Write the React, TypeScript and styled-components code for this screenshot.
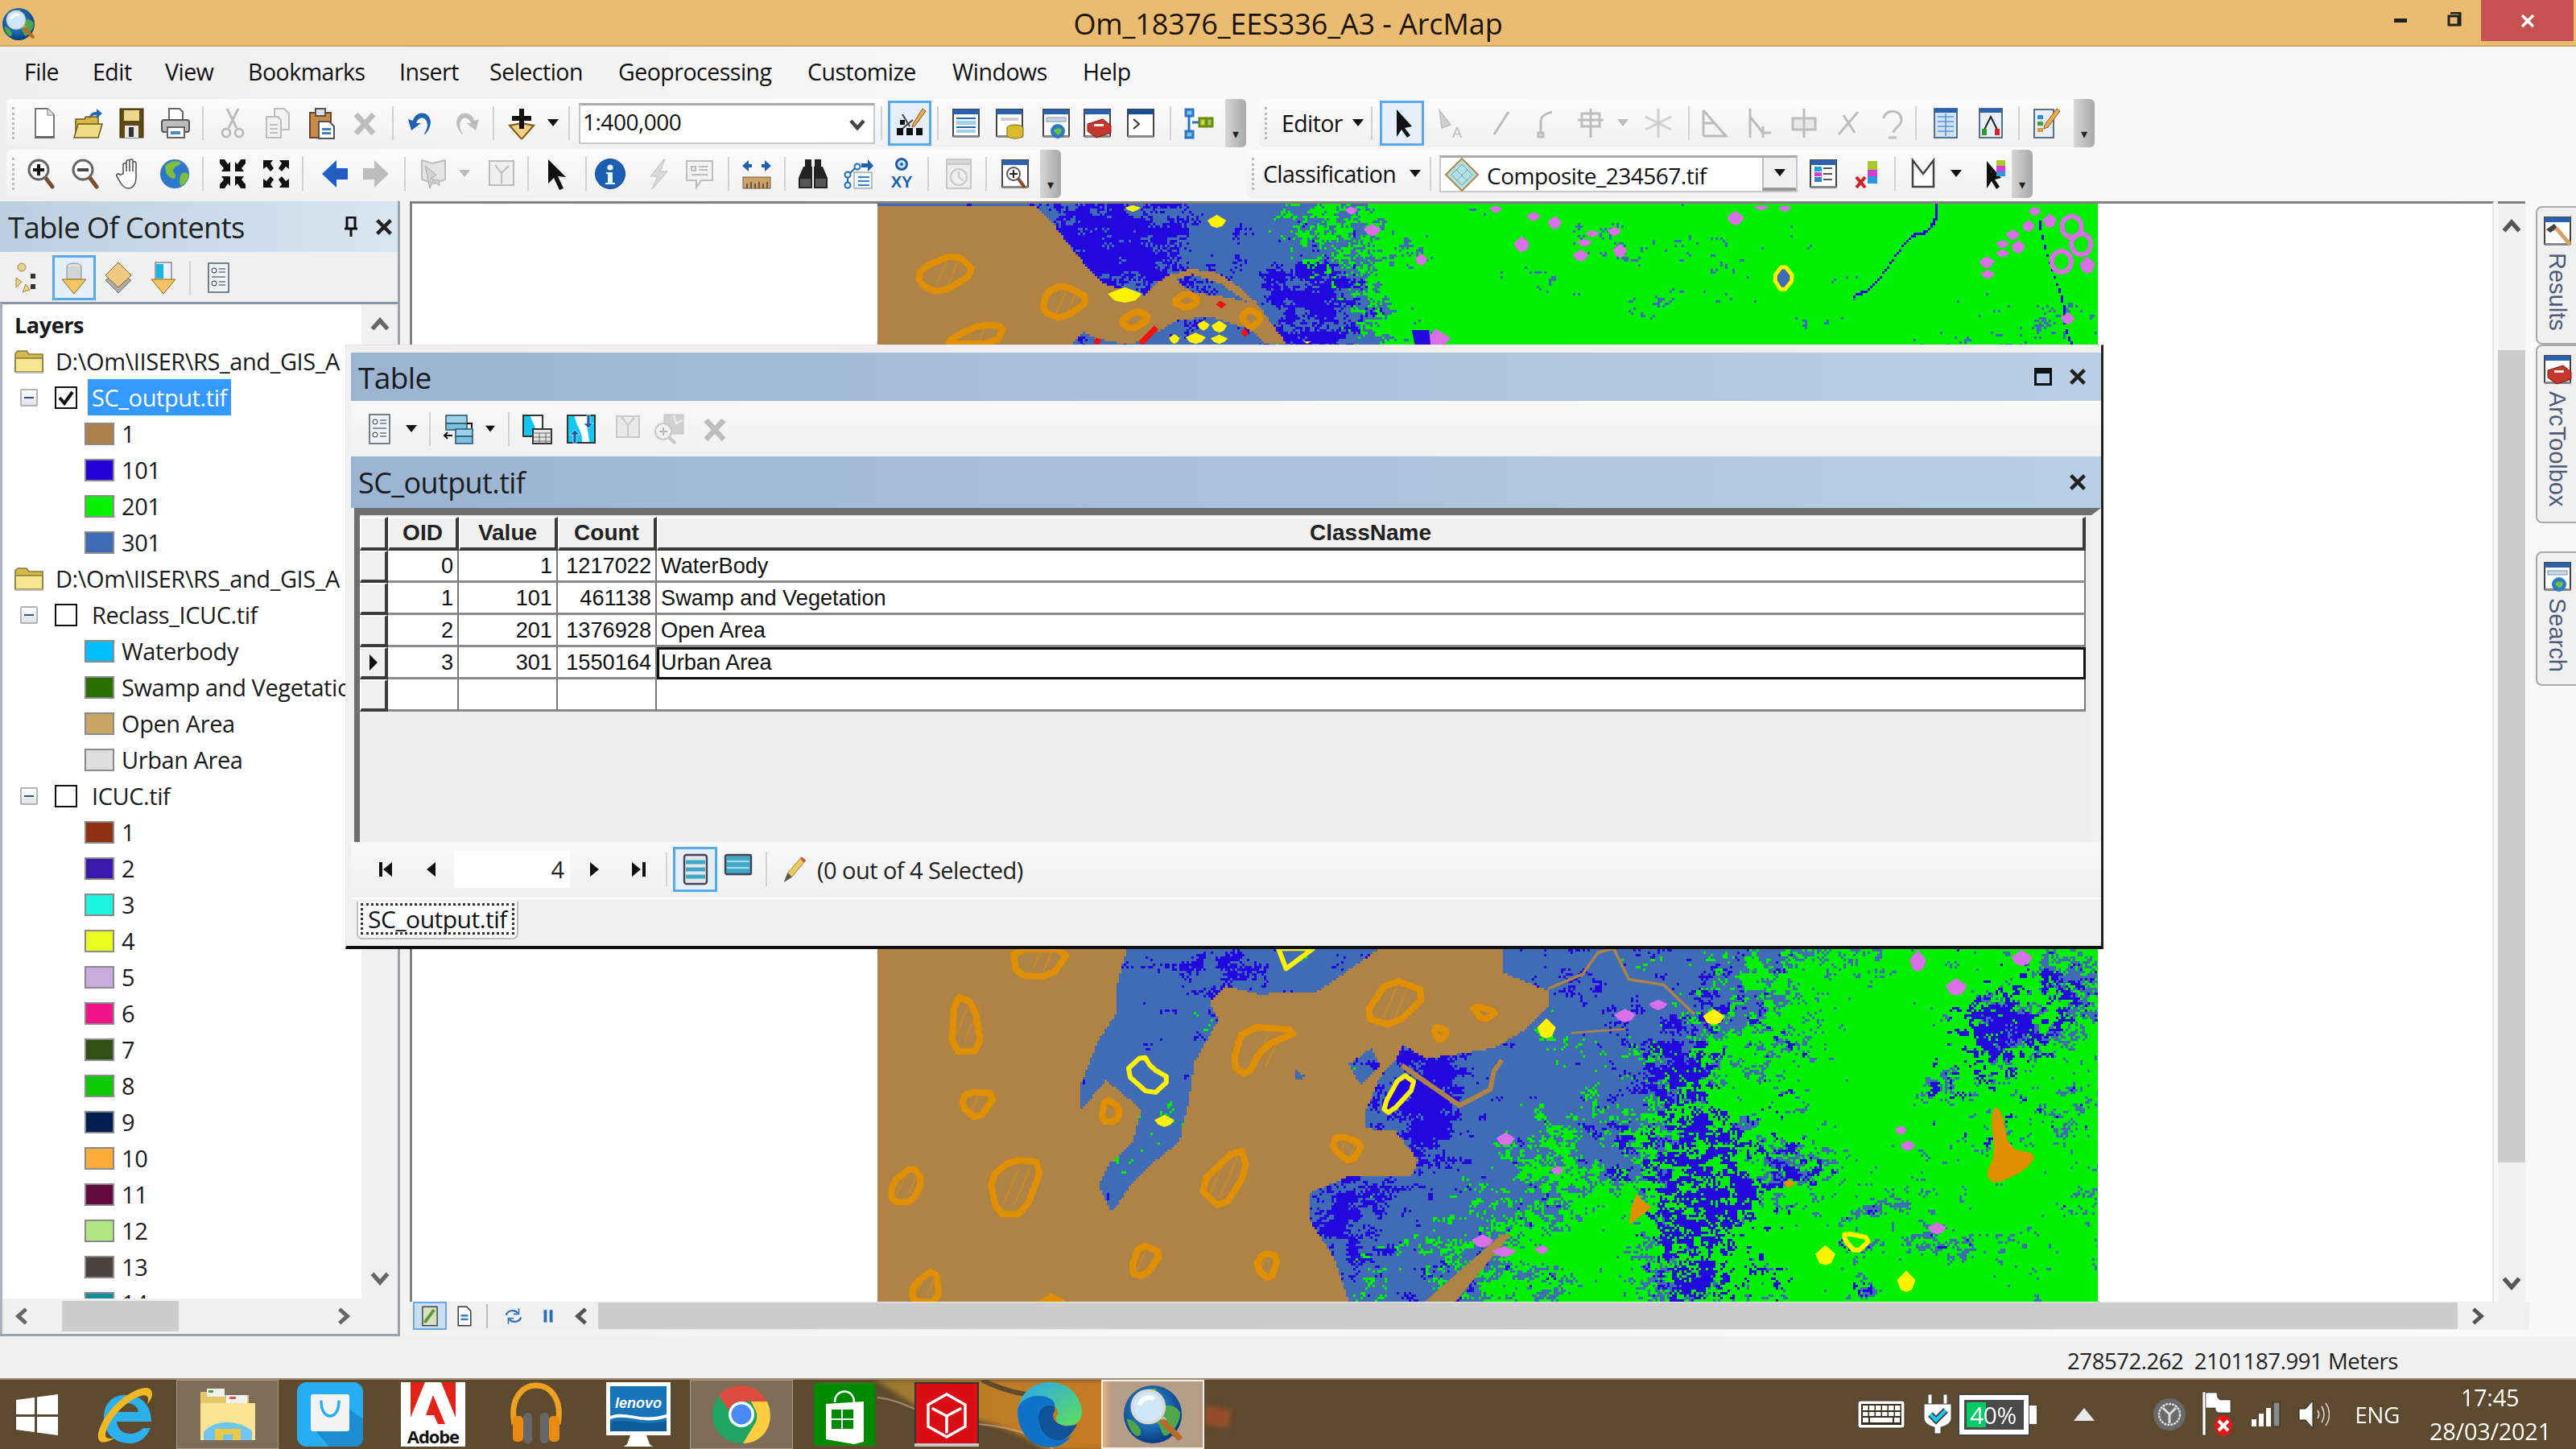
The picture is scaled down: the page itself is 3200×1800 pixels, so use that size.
import React, { useMemo } from 'react';
import styled, { createGlobalStyle } from 'styled-components';

const UI = '"Open Sans", "Noto Sans", sans-serif';
const ARIAL = '"Liberation Sans", Arial, sans-serif';

const Global = createGlobalStyle`
  html, body { margin: 0; padding: 0; width: 3200px; height: 1800px; overflow: hidden; background: #f0f0f0; }
  #root { width: 3200px; height: 1800px; }
  * { box-sizing: border-box; }
`;

/* ---------- map raster ---------- */
type Pt = [number, number];
const z5 = (p: number[]): Pt => [1100 + p[0] * 0.957, 1150 + p[1] / 3];
const z9 = (p: number[]): Pt => [1090 + p[0] * 0.976, 250 + p[1] / 3];
const str = (pts: Pt[]) => pts.map((p) => `${p[0].toFixed(1)},${p[1].toFixed(1)}`).join(' ');
const soft = (pts: Pt[]): Pt[] => {
  const out: Pt[] = [];
  pts.forEach((p, i) => {
    const q = pts[(i + 1) % pts.length];
    out.push([p[0] * 0.78 + q[0] * 0.22, p[1] * 0.78 + q[1] * 0.22]);
    out.push([p[0] * 0.22 + q[0] * 0.78, p[1] * 0.22 + q[1] * 0.78]);
  });
  return out;
};

const brownTop = ([[-20,15],[200,15],[225,90],[250,190],[285,300],[335,350],[365,275],[395,250],[425,255],[450,295],[480,370],[500,450],[520,530],[495,530],[470,470],[420,425],[380,440],[350,490],[320,530],[280,510],[260,480],[245,535],[-20,535]]).map(z9);
const lobeCut = ([[378,290],[400,268],[436,305],[470,372],[440,352],[400,335]]).map(z9);
const brownBottom = ([[-20,80],[312,80],[300,200],[298,320],[275,420],[250,600],[250,690],[285,570],[330,680],[320,800],[290,880],[275,960],[292,1065],[320,950],[345,880],[380,800],[392,650],[400,500],[430,350],[420,280],[440,220],[490,255],[495,170],[490,250],[560,240],[640,80],[800,80],[800,170],[860,240],[860,290],[830,380],[790,450],[750,470],[700,490],[670,440],[660,500],[640,560],[620,700],[620,750],[660,760],[690,870],[680,930],[600,930],[550,990],[550,1100],[580,1230],[600,1400],[-20,1400]]).map(z5);
const holeA = ([[600,510],[630,450],[640,520],[615,590]]).map(z5);
const holeB = ([[530,530],[545,560],[530,570]]).map(z5);

const inPoly = (x: number, y: number, poly: Pt[]) => {
  let c = false;
  for (let i = 0, j = poly.length - 1; i < poly.length; j = i++) {
    const [xi, yi] = poly[i]; const [xj, yj] = poly[j];
    if ((yi > y) !== (yj > y) && x < ((xj - xi) * (y - yi)) / (yj - yi) + xi) c = !c;
  }
  return c;
};
const hash = (x: number, y: number) => {
  let h = Math.imul(x | 0, 0x27d4eb2d) ^ Math.imul((y | 0) + 7919, 0x165667b1);
  h ^= h >>> 15; h = Math.imul(h, 0x85ebca6b);
  h ^= h >>> 13; h = Math.imul(h, 0xc2b2ae35);
  h ^= h >>> 16;
  return (h >>> 0) / 4294967296;
};
const vn = (x: number, y: number) => {
  const ix = Math.floor(x), iy = Math.floor(y); const fx = x - ix, fy = y - iy;
  const u = fx * fx * (3 - 2 * fx), v = fy * fy * (3 - 2 * fy);
  return (hash(ix, iy) * (1 - u) + hash(ix + 1, iy) * u) * (1 - v) + (hash(ix, iy + 1) * (1 - u) + hash(ix + 1, iy + 1) * u) * v;
};
const fbm = (x: number, y: number) => vn(x, y) * 0.55 + vn(x * 2.1 + 5, y * 2.1 + 9) * 0.3 + vn(x * 4.3 + 1, y * 4.3 + 3) * 0.15;
const smooth = (a: number, b: number, x: number) => { const t = Math.min(1, Math.max(0, (x - a) / (b - a))); return t * t * (3 - 2 * t); };
const gauss = (x: number, y: number, cx: number, cy: number, sx: number, sy: number) => Math.exp(-((x - cx) ** 2) / (2 * sx * sx) - ((y - cy) ** 2) / (2 * sy * sy));
const greenEdge = (y: number) => {
  if (y < 500) return 1560 + ((y - 253) / 175) * 90;
  const st: Pt[] = [[1178, 2150], [1317, 1960], [1483, 1800], [1615, 1700]];
  for (let i = 0; i < 3; i++) if (y <= st[i + 1][0]) { const t = (y - st[i][0]) / (st[i + 1][0] - st[i][0]); return st[i][1] + t * (st[i + 1][1] - st[i][1]); }
  return 1700;
};
const darkPrior = (x: number, y: number) => {
  const blobs: number[][] = y < 500
    ? [[1370, 285, 70, 45, 0.7], [1400, 340, 80, 40, 0.5], [1646, 400, 40, 50, 0.75], [1600, 360, 30, 40, 0.3]]
    : [[1770, 1345, 38, 75, 0.8], [2105, 1417, 50, 150, 0.55], [2152, 1533, 70, 80, 0.55], [2459, 1277, 60, 70, 0.55], [1674, 1517, 40, 70, 0.65], [1500, 1200, 50, 25, 0.45], [1700, 1225, 40, 40, 0.4], [1960, 1210, 30, 30, 0.4], [2560, 1220, 30, 40, 0.3]];
  let d = 0;
  for (const b of blobs) d += gauss(x, y, b[0], b[1], b[2], b[3]) * b[4];
  return d;
};
const classAt = (x: number, y: number): number => {
  const top = y < 500;
  if (top) { if (inPoly(x, y, brownTop) && !inPoly(x, y, lobeCut)) return 0; }
  else if (inPoly(x, y, brownBottom) && !inPoly(x, y, holeA) && !inPoly(x, y, holeB)) return 0;
  const xb = greenEdge(y);
  const g = smooth(xb - 90, xb + 240, x);
  const lf = fbm(x / 80, y / 50) - 0.5;
  const mf = vn(x / 9, y / 7) - 0.5;
  const r = hash(x, y) - 0.5;
  const dp = darkPrior(x, y);
  const s = g * (top ? 1.14 : 0.98) + lf * 1.25 + mf * 0.75 + r * 0.5 - dp * 0.55;
  if (top && x > 2300 && Math.abs(vn(x / 70 + 7, y / 130 + 2) - 0.5) < 0.006) return 2;
  if (s > 0.6) return 3;
  const d = dp + (vn(x / 16 + 40, y / 11) - 0.5) * 0.9 + r * 0.55 + (top ? 0.1 : 0.3) * g;
  return d > 0.5 ? 2 : 1;
};
const buildRaster = () => {
  const step = 3;
  const end = 2606;
  const groups: string[][] = [];
  let rowsInGroup = 99;
  let cur4: string[] = ['', '', '', ''];
  const scan = (y0: number, y1: number) => {
    for (let y = y0; y < y1; y += step) {
      if (rowsInGroup >= 6) { cur4 = ['', '', '', '']; groups.push(cur4); rowsInGroup = 0; }
      rowsInGroup++;
      let start = 1090; let cur = classAt(1090, y);
      for (let x = 1090 + step; x < end; x += step) {
        const c = classAt(x, y);
        if (c !== cur) {
          cur4[cur] += `M${start} ${y}h${x - start}v${step}h${start - x}z`;
          start = x; cur = c;
        }
      }
      cur4[cur] += `M${start} ${y}h${end - start}v${step}h${start - end}z`;
    }
  };
  scan(253, 430);
  scan(1176, 1617);
  return groups;
};
const RASTER_COLORS = ['#AF8346', '#3F6CB5', '#2208DE', '#00F000'];

const ORANGE = '#E08F00';
const YEL = '#FFF200';
const PINK = '#DA70E8';
const bottomOrange: number[][][] = [
  [[165,85],[240,90],[215,190],[170,185]], [[90,260],[115,290],[125,465],[85,470]], [[655,195],[705,250],[660,375],[620,340]],
  [[760,295],[795,320],[775,355]], [[465,375],[540,390],[490,450],[470,560],[450,520]], [[715,375],[730,395],[720,430],[712,400]],
  [[105,620],[145,625],[120,725],[98,670]], [[285,640],[305,680],[300,730],[280,730]], [[585,780],[620,810],[605,885],[580,830]],
  [[460,820],[470,910],[437,1060],[405,970]], [[35,895],[48,950],[35,1030],[8,1030],[8,960]], [[165,870],[205,885],[180,1075],[145,1075],[135,940]],
  [[330,1185],[360,1220],[335,1310],[318,1290]], [[490,1220],[510,1230],[500,1325],[480,1270]], [[65,1275],[70,1400],[35,1400],[35,1340]],
];
const topOrange: number[][][] = [
  [[100,195],[125,265],[80,345],[52,305],[55,250]], [[235,310],[272,365],[235,440],[210,410],[215,340]], [[130,460],[162,465],[150,530],[90,530],[95,510]],
  [[395,340],[410,370],[395,400],[375,375]], [[330,405],[347,435],[325,480],[308,450]], [[475,400],[490,435],[475,475],[462,430]],
];
const Hollow: React.FC<{ pts: Pt[]; c: string }> = ({ pts, c }) => {
  const xs = pts.map((p) => p[0]); const ys = pts.map((p) => p[1]);
  const x0 = Math.min(...xs), x1 = Math.max(...xs), y0 = Math.min(...ys), y1 = Math.max(...ys);
  const cx = (x0 + x1) / 2, h = y1 - y0;
  return (
    <g>
      <polygon points={str(soft(pts))} fill="none" stroke={c} strokeWidth={8} strokeLinejoin="round" />
      {[-7, 7].map((o) => (
        <line key={o} x1={cx - h * 0.14 + o} y1={y1 - h * 0.18} x2={cx + h * 0.14 + o} y2={y0 + h * 0.18} stroke={c} strokeWidth={1.4} opacity={0.75} />
      ))}
    </g>
  );
};
const dia = (cx: number, yt: number, yb: number, w: number, map: (p: number[]) => Pt) =>
  str([[cx, yt], [cx + w, (yt + yb) / 2 - 4], [cx + w * 0.6, yb - 8], [cx, yb], [cx - w * 0.6, yb - 8], [cx - w, (yt + yb) / 2 - 4]].map(map));

const bottomPink: number[][] = [[960,310,360,14],[1003,275,315,12],[1340,90,170,11],[1390,195,260,14],[1475,90,150,14],[805,770,820,12],[872,895,930,8],[775,1150,1200,14],[803,1195,1235,16],[852,1190,1225,9],[1365,1105,1150,12],[1318,745,780,8],[1327,800,840,10]];
const topPink: number[][] = [[603,20,50,8],[787,15,45,8],[835,40,75,9],[862,55,105,9],[630,85,130,11],[820,130,190,10],[910,108,135,9],[938,95,130,9],[900,140,170,10],[945,160,210,9],[895,180,225,10],[692,195,240,8],[1092,35,90,11],[1125,15,35,11],[1155,15,40,9],[1473,20,55,8],[1492,45,100,9],[1465,70,115,8],[1445,105,145,9],[1432,145,175,9],[1452,145,195,9],[1432,180,210,9],[1412,205,250,10],[1413,255,290,9],[1515,415,460,9],[1540,205,270,10]];
const bottomYel: number[][] = [[362,705,750,13],[858,345,420,12],[1075,310,370,14],[1220,1190,1265,13],[1325,1285,1365,12]];
const topYel: number[][] = [[325,15,40,10],[432,50,100,12],[315,320,378,22],[415,445,482,8],[435,445,490,10],[378,495,532,7],[405,490,532,13],[435,497,532,11],[547,522,532,6]];

const MapDrawing: React.FC = () => {
  const groups = useMemo(buildRaster, []);
  const redLines: Pt[][] = [[[355,470],[335,530]], [[282,512],[278,532]], [[465,480],[470,500]]].map((l) => l.map(z9));
  return (
    <RasterSvg width={1517} height={1364} viewBox="1090 253 1517 1364">
      {groups.map((g, i) => (
        <g key={i} shapeRendering="crispEdges">
          {g.map((d, c) => (d ? <path key={c} d={d} fill={RASTER_COLORS[c]} /> : null))}
        </g>
      ))}
      <polyline points={str([[670,520],[700,580],[745,670],[785,610],[790,540],[800,500]].map(z5))} fill="none" stroke="#AF8346" strokeWidth={6} />
      <polyline points={str([[860,235],[905,180],[925,100],[945,85],[965,200],[1010,220],[1050,330]].map(z5))} fill="none" stroke="#AF8346" strokeWidth={3.5} />
      <polyline points={str([[890,400],[960,385]].map(z5))} fill="none" stroke="#AF8346" strokeWidth={2.5} />
      <polygon points={str([[700,1400],[800,1150],[812,1150],[740,1400]].map(z5))} fill="#AF8346" />
      {bottomOrange.map((p, i) => <Hollow key={i} pts={p.map(z5)} c={ORANGE} />)}
      {topOrange.map((p, i) => <Hollow key={i} pts={p.map(z9)} c={ORANGE} />)}
      <polygon points={str([[215,1368],[235,1400],[198,1400]].map(z5))} fill={ORANGE} />
      <polygon points={str(soft([[1440,670],[1450,700],[1458,830],[1495,850],[1480,910],[1440,965],[1428,930],[1440,850],[1435,720]].map(z5) as Pt[]))} fill={ORANGE} />
      <polygon points={str([[975,1000],[985,1030],[995,1050],[965,1115],[968,1050]].map(z5))} fill={ORANGE} />
      <polygon points={str([[1172,945],[1182,960],[1172,978],[1165,960]].map(z5))} fill={ORANGE} />
      {bottomPink.map((b, i) => <polygon key={i} points={dia(b[0], b[1], b[2], b[3], z5)} fill={PINK} />)}
      {topPink.map((b, i) => <polygon key={i} points={dia(b[0], b[1], b[2], b[3], z9)} fill={PINK} />)}
      {[[1520,95],[1532,160],[1507,225]].map((c, i) => {
        const [x, y] = z9(c);
        return <ellipse key={i} cx={x} cy={y} rx={12} ry={13} fill="none" stroke={PINK} strokeWidth={6} />;
      })}
      <polygon points={str([[710,475],[730,510],[722,535],[700,535],[703,500]].map(z9))} fill={PINK} />
      <polygon points={str([[680,480],[702,480],[704,535],[684,535]].map(z9))} fill="#2208DE" />
      {bottomYel.map((b, i) => <polygon key={i} points={dia(b[0], b[1], b[2], b[3], z5)} fill={YEL} />)}
      {topYel.map((b, i) => <polygon key={i} points={dia(b[0], b[1], b[2], b[3], z9)} fill={YEL} />)}
      <polygon points={str(soft([[335,480],[345,530],[370,570],[345,635],[310,545]].map(z5) as Pt[]))} fill="#3F6CB5" stroke={YEL} strokeWidth={6} strokeLinejoin="round" />
      <polygon points={str(soft([[670,550],[690,590],[655,700],[645,680]].map(z5) as Pt[]))} fill="#2208DE" stroke={YEL} strokeWidth={6} strokeLinejoin="round" />
      <polygon points={str([[510,85],[555,85],[520,160]].map(z5))} fill="#3F6CB5" stroke={YEL} strokeWidth={6} strokeLinejoin="round" />
      <polygon points={str(soft([[1245,1145],[1280,1165],[1260,1220],[1245,1170]].map(z5) as Pt[]))} fill="#00F000" stroke={YEL} strokeWidth={6} strokeLinejoin="round" />
      <polygon points={str(soft([[1153,235],[1167,285],[1152,340],[1140,285]].map(z9) as Pt[]))} fill="#3F6CB5" stroke={YEL} strokeWidth={5} strokeLinejoin="round" />
      {redLines.map((l, i) => <polyline key={i} points={str(l)} fill="none" stroke="#F01010" strokeWidth={7} />)}
      <polygon points={str([[436,370],[444,385],[438,400],[431,385]].map(z9))} fill="#F01010" />
    </RasterSvg>
  );
};

/* ---------- toolbar icons ---------- */
const W = (p: { c?: string }) => (
  <g>
    <rect x="4" y="3" width="32" height="33" fill="#fff" stroke="#444" strokeWidth="2" />
    <rect x="4" y="3" width="32" height="6" fill={p.c || '#2a62ad'} />
    <rect x="4" y="35" width="32" height="3" fill="#888" />
  </g>
);
const glass = (x: number, y: number, inner?: React.ReactNode) => (
  <g>
    <line x1={x + 8} y1={y + 9} x2={x + 17} y2={y + 21} stroke="#7c4a2a" strokeWidth="5" strokeLinecap="round" />
    <circle cx={x} cy={y} r="12" fill="#fff" stroke="#666" strokeWidth="3" />
    {inner}
  </g>
);
const DIS = '#bdbdbd';
const corners = (d: string) => (
  <g fill="#111">
    <path d={d} />
    <path d={d} transform="translate(40 0) scale(-1 1)" />
    <path d={d} transform="translate(0 40) scale(1 -1)" />
    <path d={d} transform="translate(40 40) scale(-1 -1)" />
  </g>
);
const icons: Record<string, React.ReactNode> = {
  new: <g><path d="M9 2h15l8 8v28H9z" fill="#fff" stroke="#777" strokeWidth="2" /><path d="M24 2v8h8" fill="#e4e4e4" stroke="#777" /><rect x="9" y="36" width="23" height="3" fill="#666" /></g>,
  open: <g><path d="M5 15h11l2-3h15v25H5z" fill="#d8b945" stroke="#6b5a1a" strokeWidth="1.5" /><path d="M3 38l5-17h30l-5 17z" fill="#f0dc85" stroke="#6b5a1a" strokeWidth="1.5" /><path d="M22 15c0-7 4-9 9-9V2l7 6-7 6v-4c-4 0-7 1-9 5z" fill="#2a66b8" /></g>,
  save: <g><rect x="6" y="2" width="29" height="36" fill="#5e4a12" stroke="#3a2c08" /><rect x="11" y="4" width="19" height="13" fill="#ecd88e" /><rect x="12" y="23" width="17" height="15" fill="#e8e8e8" /><rect x="17" y="25" width="6" height="12" fill="#333" /></g>,
  print: <g><path d="M12 2h13l4 4v12H12z" fill="#fff" stroke="#666" strokeWidth="2" /><rect x="3" y="16" width="34" height="15" rx="3" fill="#bdbdbd" stroke="#555" strokeWidth="2" /><rect x="10" y="25" width="21" height="13" fill="#fff" stroke="#666" strokeWidth="2" /><rect x="14" y="30" width="12" height="4" fill="#4a86c5" /></g>,
  cut: <g stroke={DIS} strokeWidth="3" fill="none"><path d="M13 2l12 24M27 2L15 26" /><circle cx="12" cy="32" r="5" /><circle cx="28" cy="32" r="5" /></g>,
  copy: <g fill="#f2f2f2" stroke={DIS} strokeWidth="2"><path d="M16 2h12l6 6v20H16z" /><path d="M6 12h14l4 4v22H6z" /><path d="M10 22h10M10 27h10M10 32h10" /></g>,
  paste: <g><rect x="6" y="7" width="26" height="31" fill="#c98a4a" stroke="#6e4722" strokeWidth="2" /><rect x="13" y="2" width="12" height="9" fill="#ddd" stroke="#555" strokeWidth="2" /><path d="M17 18h13l6 6v15H17z" fill="#fff" stroke="#555" strokeWidth="2" /><rect x="21" y="26" width="11" height="3" fill="#3d7fc4" /><rect x="21" y="31" width="11" height="3" fill="#3d7fc4" /></g>,
  del: <path d="M9 9l22 24M31 9L9 33" stroke={DIS} strokeWidth="7" />,
  undo: <path d="M10 17C12 8 22 5 28 10c6 6 5 15-3 24l-1-1c5-7 5-14 1-18-4-3-9-1-11 5l6 0-12 9-4-14z" fill="#1f5fb4" />,
  redo: <path d="M30 17C28 8 18 5 12 10c-6 6-5 15 3 24l1-1c-5-7-5-14-1-18 4-3 9-1 11 5l-6 0 12 9 4-14z" fill={DIS} />,
  add: <g><path d="M20 20l15 3-15 17L5 23z" fill="#f0cf85" stroke="#7c5c12" strokeWidth="2" /><path d="M17 2h6v9h9v6h-9v10h-6V17H8v-6h9z" fill="#111" /></g>,
  win1: <g><W /><g fill="#2a62ad"><rect x="8" y="13" width="24" height="2" /><rect x="8" y="24" width="24" height="2" /></g><rect x="8" y="17" width="24" height="5" fill="#9fd1ef" /><rect x="8" y="28" width="24" height="4" fill="#9fd1ef" /></g>,
  catalog: <g><W /><ellipse cx="27" cy="26" rx="10" ry="4" fill="#d9bc2e" stroke="#7a6612" /><path d="M17 26v9c0 2 5 4 10 4s10-2 10-4v-9" fill="#d9bc2e" stroke="#7a6612" /><rect x="9" y="13" width="22" height="4" fill="#cfcfcf" /></g>,
  search: <g><W /><rect x="8" y="13" width="24" height="5" fill="#cbd8e6" stroke="#7d94ad" /><circle cx="22" cy="30" r="9" fill="#2d79c7" /><path d="M17 29c3-4 8-3 10-1 0 3-3 8-6 6-1-2-4-3-4-5z" fill="#6fbe44" /></g>,
  toolboxw: <g><W /><path d="M8 21l19-6 10 8v9L19 38 8 30z" fill="#c5362c" stroke="#7c1712" /><rect x="16" y="21" width="12" height="3" fill="#eee" /></g>,
  python: <g><W c="#1b4f94" /><path d="M11 15l7 6-7 6" fill="none" stroke="#333" strokeWidth="2" /></g>,
  model: <g stroke="#2a72c3" fill="none" strokeWidth="3"><rect x="5" y="3" width="9" height="8" fill="#7cc0ef" /><rect x="5" y="30" width="9" height="8" fill="#7cc0ef" /><path d="M9 11v19M13 19h9" /><rect x="22" y="14" width="8" height="10" fill="#c9d84b" stroke="#6b8a12" /><rect x="31" y="14" width="7" height="10" fill="#9acb4a" stroke="#6b8a12" /></g>,
  editorTb: <g><path d="M7 30L24 16" stroke="#444" strokeWidth="2" /><path d="M11 9l9 15" stroke="#444" strokeWidth="2" /><g fill="#111"><rect x="4" y="26" width="8" height="9" /><rect x="16" y="26" width="8" height="9" /><rect x="28" y="26" width="8" height="9" /><rect x="8" y="16" width="6" height="6" /></g><path d="M24 21L36 2l4 3-13 18-4 2z" fill="#e3b04b" stroke="#a24a2a" /></g>,
  zoomIn: glass(17, 15, <path d="M15 8h4v5h5v4h-5v5h-4v-5h-5v-4h5z" fill="#111" />),
  zoomOut: glass(17, 15, <rect x="10" y="13" width="14" height="4" fill="#444" />),
  hand: <path d="M10 20V9c0-3 4-3 4 0v8V5c0-3 4-3 4 0v12V4c0-3 4-3 4 0v13V7c0-3 4-3 4 0v18c0 6-3 13-10 13-5 0-8-4-11-10l-3-5c-1-3 2-4 4-2z" fill="#fff" stroke="#555" strokeWidth="1.6" />,
  globe: <g><circle cx="20" cy="20" r="18" fill="#2e78c9" /><path d="M8 10c6-6 14-7 20-4-2 5-9 4-10 9-1 4 5 5 3 10-3 3-8-2-11-5-2-3-1-7-2-10zM28 20c4-2 8-2 9 1 0 6-4 12-9 14-3-4-2-10 0-15z" fill="#7fbe3e" /></g>,
  fixIn: corners('M4 2h6l4 6 3-3v12H6l3-4-5-6z'),
  fixOut: corners('M4 3h12l-3 4 4 6-4 4-5-6-4 3z'),
  back: <path d="M4 20L22 3v10h14v14H22v10z" fill="#1f5fc4" />,
  fwd: <path d="M36 20L18 3v10H4v14h14v10z" fill={DIS} />,
  selF: <g><path d="M4 3l13 4 16-4v24l-14 5L4 27z" fill="#e4e4e4" stroke={DIS} strokeWidth="2" /><path d="M8 10l6 28 4-10 8 7-1-7-10-2 7-5z" fill="#d2d2d2" stroke="#a8a8a8" /></g>,
  clearS: <g><rect x="5" y="4" width="30" height="30" fill="#efefef" stroke={DIS} strokeWidth="2" /><path d="M12 9l8 10 9-9M20 19v13" stroke={DIS} strokeWidth="2" fill="none" /></g>,
  pointer: <path d="M9 2l22 22-10-1 7 15-5 2-7-15-7 7z" fill="#111" />,
  ident: <g><circle cx="20" cy="20" r="18.5" fill="#1b5fb4" stroke="#124a8f" /><circle cx="20" cy="12" r="3.6" fill="#eaf3ff" /><path d="M15 18h8v13h3v2H14v-2h3V20h-2z" fill="#eaf3ff" /></g>,
  flash: <path d="M27 2L10 23h9l-7 16 19-22h-9l6-15z" fill="#dcdcdc" stroke={DIS} />,
  html: <g fill="#f3f3f3" stroke={DIS} strokeWidth="2"><path d="M4 4h32v24H22l-6 9v-9H4z" /><path d="M10 11h5v5h-5zM19 11h11M19 15h11M10 21h20" /></g>,
  measure: <g><path d="M2 10l8-7v5h4v4h-4v5zM38 10l-8-7v5h-4v4h4v5z" fill="#1d5fae" /><rect x="3" y="24" width="34" height="14" fill="#c9a36e" stroke="#7a5a2c" /><path d="M8 32v6M13 30v8M18 32v6M23 30v8M28 32v6M33 30v8" stroke="#5c4322" strokeWidth="1.6" /></g>,
  find: <g fill="#222"><rect x="10" y="2" width="8" height="10" /><rect x="22" y="2" width="8" height="10" /><path d="M8 11h11v27H2V25zM32 11H21v27h17V25z" /><rect x="4" y="26" width="13" height="10" fill="#555" /><rect x="23" y="26" width="13" height="10" fill="#555" /></g>,
  route: <g><rect x="15" y="18" width="22" height="20" fill="#eef5fb" stroke="#888" /><path d="M20 24h14M20 29h14M20 34h14" stroke="#3d7fc4" strokeWidth="2" /><g fill="none" stroke="#1d6ec0" strokeWidth="2"><circle cx="7" cy="21" r="3.5" /><circle cx="7" cy="34" r="3.5" /><circle cx="19" cy="11" r="3.5" /><path d="M7 24v7M10 19l6-6" /></g><path d="M24 7h8V2l7 8-7 7v-5h-8z" fill="#1d5fae" /></g>,
  xy: <g><circle cx="20" cy="8" r="6.5" fill="#cfe4f6" stroke="#1d5fae" strokeWidth="3" /><circle cx="20" cy="8" r="2" fill="#1d5fae" /><text x="20" y="37" textAnchor="middle" fontFamily={ARIAL} fontWeight="700" fontSize="20" fill="#1d5fae">XY</text></g>,
  time: <g fill="#eeeeee" stroke="#c8c8c8" strokeWidth="2"><rect x="5" y="2" width="30" height="36" /><rect x="5" y="2" width="30" height="6" fill="#d8d8d8" /><circle cx="20" cy="24" r="10" /><path d="M20 17v7l5 4" fill="none" /></g>,
  viewer: <g><W /><circle cx="18" cy="20" r="8" fill="#fff" stroke="#555" strokeWidth="2" /><path d="M13 20h10M18 15v10" stroke="#222" strokeWidth="2" /><path d="M24 26l8 11" stroke="#8a4b2a" strokeWidth="4" /></g>,
  pointerB: <path d="M13 3v34l6-9 7 10 4-3-7-9 9-2z" fill="#111" />,
  sketch: <g stroke={DIS} fill="#e8e8e8" strokeWidth="1.5"><path d="M6 4l14 18-11 4z" fill="#cfcfcf" /><text x="22" y="38" fontFamily={ARIAL} fontSize="18" fill={DIS} stroke="none">A</text></g>,
  segA: <path d="M10 34L28 6" stroke={DIS} strokeWidth="3" />,
  segB: <g stroke={DIS} strokeWidth="3" fill="none"><path d="M12 34V18c0-8 8-10 14-12" /><rect x="9" y="32" width="6" height="5" /></g>,
  vert: <g stroke={DIS} strokeWidth="3" fill="none"><rect x="9" y="8" width="22" height="16" /><path d="M20 2v36M4 16h32" /></g>,
  star: <g stroke="#cfcfcf" strokeWidth="3"><path d="M20 2v36M4 12l32 16M36 12L4 28" /></g>,
  topo: <g stroke={DIS} strokeWidth="3" fill="none"><path d="M6 4v32M6 36h28L6 4M6 20h14" /></g>,
  topo2: <g stroke={DIS} strokeWidth="3" fill="none"><path d="M8 2v36M8 12l16 20M24 24v14M24 32h10" /></g>,
  split: <g stroke={DIS} strokeWidth="3" fill="#e8e8e8"><rect x="6" y="14" width="28" height="14" /><path d="M20 2v36" /></g>,
  xcut: <path d="M8 34L32 6M14 10l14 22" stroke={DIS} strokeWidth="3" />,
  q: <g stroke={DIS} strokeWidth="3" fill="none"><path d="M10 14c2-12 22-12 22 2 0 8-9 9-10 16" /><path d="M16 38h10" /></g>,
  attr: <g><rect x="6" y="2" width="28" height="36" fill="#cfe3f5" stroke="#5a6f8a" strokeWidth="2" /><rect x="6" y="2" width="28" height="5" fill="#2a62ad" /><path d="M10 12h20M10 18h20M10 24h20M10 30h20M20 8v28" stroke="#5b96cf" strokeWidth="1.6" /></g>,
  sketchProp: <g><rect x="6" y="2" width="28" height="36" fill="#e6eef6" stroke="#5a6f8a" strokeWidth="2" /><rect x="6" y="2" width="28" height="5" fill="#2a62ad" /><path d="M11 30L20 12l9 18" stroke="#222" fill="none" strokeWidth="2" /><rect x="9" y="27" width="6" height="8" fill="#2c9a32" /><rect x="25" y="27" width="6" height="8" fill="#cf2626" /></g>,
  createF: <g><rect x="6" y="3" width="24" height="35" fill="#e6eef6" stroke="#5a6f8a" strokeWidth="2" /><rect x="10" y="10" width="7" height="5" fill="#2e8fd5" /><rect x="10" y="18" width="7" height="5" fill="#3fa53a" /><rect x="10" y="26" width="7" height="5" fill="#d79a3c" /><path d="M19 22L34 2l4 3-15 20-5 2z" fill="#e3b04b" stroke="#a24a2a" /></g>,
  clsWin: <g><W /><rect x="9" y="11" width="9" height="6" fill="#1da0e0" /><rect x="9" y="18" width="9" height="5" fill="#d53bd5" /><rect x="9" y="24" width="9" height="6" fill="#2a86d8" /><path d="M20 13h11M20 20h11M20 27h11" stroke="#555" strokeWidth="2" /></g>,
  clsX: <g><rect x="22" y="4" width="12" height="11" fill="#a9c62b" /><rect x="22" y="15" width="12" height="8" fill="#d53bd5" /><rect x="22" y="23" width="12" height="9" fill="#2a9ae0" /><path d="M8 24l11 13M19 24L8 37" stroke="#d32020" strokeWidth="4" /></g>,
  clsPoly: <path d="M8 3v33h26V3l-13 17z" fill="#fff" stroke="#444" strokeWidth="2.5" />,
  clsSel: <g><path d="M12 4v34l6-9 6 10 4-3-6-9 8-2z" fill="#111" /><rect x="24" y="3" width="11" height="7" fill="#a9c62b" /><rect x="24" y="10" width="11" height="7" fill="#d53bd5" /><rect x="24" y="17" width="11" height="6" fill="#2a9ae0" /></g>,
  tocDraw: <g fill="#e8cf8f" stroke="#a88b3c"><circle cx="9" cy="7" r="5" /><path d="M2 20l7 5-7 7zM14 28l5 7-9 3z" /><rect x="20" y="15" width="6" height="6" fill="#333" stroke="none" /><rect x="20" y="28" width="6" height="6" fill="#333" stroke="none" /></g>,
  tocSrc: <g><ellipse cx="20" cy="6" rx="9" ry="4" fill="#dfdfdf" stroke="#888" /><path d="M11 6v16h18V6" fill="#d4d4d4" stroke="#888" /><path d="M5 22h30L20 40z" fill="#f2c466" stroke="#8e6a18" /></g>,
  tocVis: <g><path d="M4 23l16 16 16-16-16-10z" fill="#aaa" stroke="#777" /><path d="M20 1l16 16-16 15L4 17z" fill="#f0ca83" stroke="#8e6a18" /></g>,
  tocSel: <g><rect x="10" y="1" width="20" height="22" fill="#eef" stroke="#555" /><path d="M11 3h9v18h-9z" fill="#1ab8e0" /><path d="M5 22h30L20 40z" fill="#f2c466" stroke="#8e6a18" /></g>,
  tocOpt: <g><rect x="8" y="2" width="25" height="36" fill="#eef4fa" stroke="#566" strokeWidth="1.6" /><circle cx="15" cy="11" r="3" fill="#fff" stroke="#333" /><circle cx="15" cy="27" r="3" fill="#fff" stroke="#333" /><path d="M21 9h8M21 13h8M21 25h8M21 29h8M12 19h17" stroke="#777" strokeWidth="1.6" /></g>,
  relT: <g><rect x="4" y="3" width="26" height="10" fill="#9ad3e8" stroke="#34586e" strokeWidth="1.6" /><rect x="4" y="13" width="26" height="8" fill="#7cc0df" stroke="#34586e" strokeWidth="1.6" /><rect x="16" y="20" width="21" height="9" fill="#9ad3e8" stroke="#34586e" strokeWidth="1.6" /><rect x="16" y="29" width="21" height="9" fill="#7cc0df" stroke="#34586e" strokeWidth="1.6" /><path d="M2 28h10M6 24l-4 4 4 4M30 13h6l0 6" stroke="#111" strokeWidth="2" fill="none" /></g>,
  selTbl: <g><rect x="3" y="3" width="24" height="26" fill="#fff" stroke="#333" strokeWidth="2" /><path d="M4 4h8c2 9 8 12 6 24H4z" fill="#12c7ee" /><rect x="15" y="20" width="23" height="18" fill="#e4e4e4" stroke="#333" strokeWidth="2" /><path d="M15 25h23M15 30h23M15 35h23M23 25v13M31 25v13" stroke="#666" /></g>,
  swTbl: <g><rect x="3" y="3" width="34" height="34" fill="#fff" stroke="#333" strokeWidth="2" /><path d="M4 4h8c1 12 10 18 9 32H4z" fill="#12c7ee" /><path d="M28 4h8v32h-6c-1-12-4-20-2-32z" fill="#12c7ee" /><path d="M31 2v11h4l-6 6-6-6h4V2zM10 38V27H6l6-6 6 6h-4v11z" fill="#1d5fae" stroke="#fff" strokeWidth=".6" /></g>,
  zmSel: <g><rect x="6" y="4" width="28" height="26" fill="#e9e9e9" stroke="#c8c8c8" strokeWidth="2" /><path d="M12 5l8 10 8-9M20 15v14" stroke="#c8c8c8" strokeWidth="2" fill="none" /></g>,
  zmSel2: <g><rect x="14" y="2" width="24" height="24" fill="#d0d0d0" stroke="#c2c2c2" /><path d="M26 3l3 10 8-4" stroke="#eee" strokeWidth="2" fill="none" /><circle cx="13" cy="23" r="10" fill="#f2f2f2" stroke="#c8c8c8" strokeWidth="2" /><path d="M8 23h10M13 18v10" stroke="#b8b8b8" strokeWidth="2" /><path d="M20 30l8 8" stroke="#c8c8c8" strokeWidth="4" /></g>,
  pencil: <g><path d="M4 38l5-13L29 2l6 5-20 24z" fill="#ecca62" stroke="#8a6b2a" /><path d="M27 4l3-2 5 5-3 3z" fill="#d1583e" /><path d="M4 38l5-13 6 6z" fill="#555" /></g>,
  stripes: <g><rect x="6" y="2" width="28" height="36" rx="3" fill="#e6e6e6" stroke="#445" strokeWidth="2.4" /><path d="M8 11h24M8 20h24M8 29h24" stroke="#3fa9c7" strokeWidth="5" /></g>,
  stripes2: <g><rect x="4" y="2" width="32" height="24" rx="2" fill="#3fa9c7" stroke="#445" strokeWidth="2.4" /><path d="M6 10h28M6 18h28" stroke="#a7dbe9" strokeWidth="2" /></g>,
  refresh: <g fill="none" stroke="#2a6fb5" strokeWidth="3.5"><path d="M6 18C8 9 22 6 28 14" /><path d="M34 22c-2 9-16 12-22 4" /><path d="M30 5v11H20M10 35V24h10" strokeWidth="2.5" /></g>,
  pause: <g fill="#2a6fb5"><rect x="10" y="6" width="7" height="28" /><rect x="23" y="6" width="7" height="28" /></g>,
  dataView: <g><rect x="6" y="2" width="28" height="36" fill="#d7e0c2" stroke="#333" strokeWidth="2" /><path d="M10 32l18-24" stroke="#5a9a3a" strokeWidth="6" /></g>,
  layoutV: <g><path d="M8 2h16l8 8v28H8z" fill="#fff" stroke="#333" strokeWidth="2.2" /><rect x="13" y="17" width="14" height="4" fill="#3d7fc4" /><rect x="13" y="24" width="14" height="4" fill="#3d7fc4" /></g>,
};

const Ico: React.FC<{ n: string; s?: number }> = ({ n, s = 40 }) => (
  <svg width={s} height={s} viewBox="0 0 40 40" style={{ flex: 'none' }}>{icons[n]}</svg>
);

/* ---------- shell ---------- */
const Root = styled.div`
  width: 3200px; height: 1800px; display: flex; flex-direction: column; position: relative;
  font-family: ${UI}; color: #111; background: linear-gradient(90deg, #efefef, #f8f8f8 45%, #f9f9f9);
`;
const TitleBar = styled.header`
  height: 58px; flex: none; display: grid; grid-template-columns: 1fr auto 1fr; background: #e9bc71; border-bottom: 2px solid #d2a55f;
`;
const TitleLeft = styled.div`display: flex; align-items: center; padding-left: 2px; padding-top: 0;`;
const TitleText = styled.div`font-size: 36px; line-height: 60px; letter-spacing: -0.1px; color: #1c1408; font-family: ${UI};`;
const TitleRight = styled.div`display: flex; justify-content: flex-end; align-items: flex-start; padding-right: 3px;`;
const WinBtn = styled.div<{ $w: number; $red?: boolean }>`
  width: ${(p) => p.$w}px; height: 51px; display: flex; align-items: center; justify-content: center;
  background: ${(p) => (p.$red ? '#c75050' : 'transparent')};
`;
const MenuBar = styled.nav`height: 62px; flex: none; display: flex; align-items: center; padding-left: 30px;`;
const MenuItem = styled.div<{ $w: number }>`width: ${(p) => p.$w}px; font-size: 28.5px; letter-spacing: -0.5px; color: #111; line-height: 40px;`;
const ToolRow = styled.div`height: 63px; flex: none; display: flex; padding: 3px 0 0 8px;`;
const ToolGroup = styled.div<{ $w: number; $ml?: number }>`
  width: ${(p) => p.$w}px; margin-left: ${(p) => p.$ml || 0}px; flex: none; height: 60px; display: flex; align-items: center;
  background: linear-gradient(180deg, #fcfcfc, #f0f0f0); border-radius: 6px;
`;
const Grip = styled.div`flex: none; width: 5px; height: 40px; margin: 0 8px 0 7px; border-left: 3px dotted #bbb;`;
const EndGrip = styled.div`
  flex: none; width: 26px; height: 60px; margin-left: auto; display: flex; align-items: flex-end; justify-content: center; padding-bottom: 9px;
  background: linear-gradient(90deg, #d6d6d6, #a8a8a8); border-radius: 0 6px 6px 0; color: #222; font-size: 16px; line-height: 16px;
  &::after { content: '▾'; }
`;
const Slot = styled.div<{ $w: number; $on?: boolean }>`
  flex: none; width: ${(p) => p.$w}px; height: 56px; display: flex; align-items: center; justify-content: center;
  ${(p) => (p.$on ? 'background: #e4eff9; outline: 3px solid #58a8f0; outline-offset: -3px;' : '')}
`;
const Sep = styled.div<{ $w: number }>`
  flex: none; width: ${(p) => p.$w}px; display: flex; justify-content: center;
  &::after { content: ''; display: block; width: 2px; height: 42px; background: #d2d2d2; }
`;
const Drop = styled.div<{ $w: number }>`
  flex: none; width: ${(p) => p.$w}px; display: flex; justify-content: center;
`;
const GroupLabel = styled.div<{ $w: number; $ml?: number }>`
  flex: none; width: ${(p) => p.$w}px; margin-left: ${(p) => p.$ml || 0}px; font-size: 28.5px; letter-spacing: -0.6px; white-space: nowrap; line-height: 40px;
`;
const ComboBox = styled.div<{ $w: number; $h: number }>`
  flex: none; width: ${(p) => p.$w}px; height: ${(p) => p.$h}px; background: #fff; display: flex; align-items: center;
  border: 2px solid #c8c8c8; border-top: 3px solid #aaa; font-size: 28px; letter-spacing: -0.5px;
`;
const ComboText = styled.div<{ $up?: boolean }>`
  flex: 1; padding-left: ${(p) => (p.$up ? 3 : 5)}px; white-space: nowrap; overflow: hidden; padding-bottom: ${(p) => (p.$up ? 6 : 0)}px; padding-top: ${(p) => (p.$up ? 0 : 3)}px;
`;
const ComboChev = styled.div`width: 40px; display: flex; justify-content: center;`;
const ComboDrop = styled.div`
  width: 42px; height: 100%; background: #f0f0f0; border-left: 2px solid #bbb; border-bottom: 4px solid #999; display: flex; align-items: center; justify-content: center;
`;

const Workspace = styled.div`flex: 1; display: flex; min-height: 0; padding-top: 4px;`;
const Toc = styled.aside`
  width: 497px; flex: none; display: flex; flex-direction: column; border-bottom: 3px solid #9aa3ad; border-right: 3px solid #9aa3ad; background: #f0f0f0;
`;
const TocTitle = styled.div`
  height: 63px; flex: none; display: flex; align-items: center; padding: 0 5px 0 10px; justify-content: space-between;
  background: linear-gradient(90deg, #bccfe1, #d9e6f2); font-size: 36.5px; letter-spacing: -0.7px; color: #222;
`;
const PanelIcons = styled.div`display: flex; align-items: center; gap: 20px;`;
const TocTools = styled.div`height: 62px; flex: none; display: flex; align-items: center; padding: 2px 0 0 10px;`;
const TocBody = styled.div`
  flex: 1; min-height: 0; display: grid; grid-template-columns: 1fr 45px; grid-template-rows: 1fr 44px;
  border-top: 3px solid #8c96a3; border-left: 3px solid #aab2bc;
`;
const Tree = styled.div`background: #fff; overflow: hidden; padding-top: 3px;`;
const TreeRow = styled.div<{ $pad: number; $bold?: boolean }>`
  height: 45px; display: flex; align-items: center; padding-left: ${(p) => p.$pad}px; white-space: nowrap;
  font-size: 29px; letter-spacing: -0.42px; color: #1a1a1a; font-weight: ${(p) => (p.$bold ? 700 : 400)};
`;
const LayersLabel = styled(TreeRow)`font-size: 27px; padding-left: 15px;`;
const Minus = styled.div`
  flex: none; width: 22px; height: 22px; border: 2px solid #b4b4b4; border-radius: 2px; background: linear-gradient(#fff, #dfe4ec); margin-right: 21px; position: relative;
  &::after { content: ''; position: absolute; left: 3px; right: 3px; top: 8px; height: 2px; background: #42527e; }
`;
const Check = styled.div`
  flex: none; width: 28px; height: 28px; border: 2.5px solid #111; background: #fff; margin-right: 13px; display: flex; align-items: center; justify-content: center;
`;
const NodeName = styled.span<{ $sel?: boolean }>`
  padding: 0 5px; line-height: 45px; height: 45px;
  ${(p) => (p.$sel ? 'background: #3399ff; color: #fff;' : '')}
`;
const Swatch = styled.div<{ $c: string }>`
  flex: none; width: 37px; height: 28px; background: ${(p) => p.$c}; border: 2px solid #8a8a8a; margin-right: 9px;
`;
const VScroll = styled.div`background: #f0f0f0; display: flex; flex-direction: column; align-items: center; justify-content: space-between; padding: 13px 0 13px;`;
const HScroll = styled.div`background: #f0f0f0; display: flex; align-items: center; height: 44px;`;
const ScrollEnd = styled.div<{ $w: number }>`flex: none; width: ${(p) => p.$w}px; display: flex; justify-content: center;`;
const Thumb = styled.div<{ $w: number }>`flex: none; width: ${(p) => p.$w}px; height: 38px; background: #cdcdcd;`;
const Corner = styled.div`background: #f0f0f0;`;

const MapCol = styled.main`flex: 1; min-width: 0; margin-left: 12px; display: flex; flex-direction: column; padding-bottom: 8px;`;
const MapTop = styled.div`flex: 1; min-height: 0; display: flex;`;
const MapCanvas = styled.div`
  width: 2589px; flex: none; background: #fff; border-top: 3px solid #808080; border-left: 3px solid #808080; padding-left: 578px; overflow: hidden; border-right: 2px solid #e6e6e6;
`;
const RasterSvg = styled.svg`display: block;`;
const MapScroll = styled.div`
  width: 34px; flex: none; margin-left: 5px; border-top: 3px solid #808080; background: #f0f0f0; display: flex; flex-direction: column; align-items: center; padding-top: 16px;
`;
const VThumb = styled.div`width: 34px; height: 1009px; background: #cdcdcd; margin-top: 140px; margin-bottom: 136px;`;
const MapBottom = styled.div`
  height: 35px; flex: none; display: flex; align-items: center; width: 2633px; background: #f0f0f0; padding-left: 4px;
`;
const ViewBtn = styled.div<{ $w: number; $on?: boolean }>`
  flex: none; width: ${(p) => p.$w}px; height: 35px; display: flex; align-items: center; justify-content: center;
  ${(p) => (p.$on ? 'background: #c9def2; border: 2px solid #6ba6de;' : '')}
`;
const BottomSep = styled.div`flex: none; width: 2px; height: 30px; background: #bbb; margin: 0 10px 0 5px;`;
const HThumb = styled.div`flex: none; width: 2310px; height: 33px; background: #cdcdcd;`;

const SideTabs = styled.div`width: 52px; flex: none; margin-left: 10px; padding-top: 6px; display: flex; flex-direction: column; margin-right: -2px;`;
const SideTab = styled.div<{ $h: number; $mt?: number }>`
  height: ${(p) => p.$h}px; margin-top: ${(p) => p.$mt || 0}px; flex: none; background: #f0f0f0; border: 2px solid #a9a9a9; border-right: none; border-radius: 8px 0 0 8px;
  display: flex; flex-direction: column; align-items: center; padding-top: 9px;
`;
const SideText = styled.div`
  writing-mode: vertical-rl; font-family: ${ARIAL}; font-size: 29px; color: #4e5a78; margin-top: 7px; line-height: 40px;
`;
const StatusBar = styled.footer`
  height: 52px; flex: none; display: flex; justify-content: flex-end; align-items: center; padding: 8px 221px 0 0;
  font-size: 27.5px; letter-spacing: -0.45px; color: #222; background: #f0f0f0;
`;

/* ---------- taskbar ---------- */
const TaskBar = styled.footer`
  height: 88px; flex: none; position: relative; display: flex; align-items: center; background: #5e4a2e; color: #fff; border-top: 2px solid #a08d72; overflow: hidden;
`;
const Wallpaper = styled.svg`position: absolute; left: 0; top: 0; pointer-events: none;`;
const TaskInner = styled.div`position: relative; display: flex; align-items: center; width: 100%; height: 100%;`;
const StartSlot = styled.div`flex: none; width: 91px; display: flex; justify-content: center;`;
const TaskSlot = styled.div<{ $on?: boolean; $w?: number; $strong?: boolean }>`
  flex: none; width: ${(p) => p.$w || 127.7}px; height: 86px; display: flex; align-items: center; justify-content: center;
  ${(p) => (p.$on ? 'background: rgba(255,255,255,.2); border: 1px solid rgba(255,255,255,.3);' : '')}
  ${(p) => (p.$strong ? 'background: rgba(255,225,210,.55); border: 2px solid #f4efe8;' : '')}
`;
const AdobeTile = styled.div`
  width: 80px; height: 80px; background: #fff; display: flex; flex-direction: column; align-items: center; overflow: hidden;
`;
const AdobeWord = styled.div`font-family: ${UI}; font-weight: 700; font-size: 22px; letter-spacing: -1.1px; line-height: 20px; color: #111; margin-top: 1px;`;
const Tray = styled.div`margin-left: auto; display: flex; align-items: center; height: 100%; padding-right: 32px;`;
const TrayItem = styled.div<{ $w: number; $ml?: number }>`
  flex: none; width: ${(p) => p.$w}px; margin-left: ${(p) => p.$ml || 0}px; display: flex; justify-content: center; align-items: center;
`;
const Battery = styled.div`
  width: 86px; height: 49px; border: 6px solid #fff; background: #4a4a4a; position: relative; display: flex; align-items: center; justify-content: center;
  font-size: 30px; color: #fff; letter-spacing: -.5px; outline: 2px solid #444;
  &::before { content: ''; position: absolute; left: 3px; top: 3px; bottom: 3px; width: 24px; background: #00cc66; }
  &::after { content: ''; position: absolute; right: -16px; top: 7px; width: 9px; height: 23px; background: #fff; }
`;
const BatteryText = styled.span`position: relative; z-index: 1; margin-left: -2px;`;
const Lang = styled.div`font-size: 28px; letter-spacing: -.5px; color: #fff; width: 70px; text-align: center; margin-left: 24px;`;
const Clock = styled.div`margin-left: 30px; width: 150px; text-align: center; font-size: 29px; letter-spacing: -.3px; line-height: 42px; color: #fff;`;

/* ---------- table window ---------- */
const TableWin = styled.section`
  position: absolute; left: 429px; top: 428px; width: 2184px; height: 751px; background: #f0f0f0; display: flex; flex-direction: column;
  padding: 9px 0 0 6px; border-bottom: 4px solid #111; border-right: 3px solid #222; border-top: 1px solid #e6e6e6; border-left: 1px solid #e6e6e6;
`;
const BlueBar = styled.div<{ $h: number; $fs: number }>`
  height: ${(p) => p.$h}px; flex: none; display: flex; align-items: center; justify-content: space-between; padding: 0 17px 0 9px;
  background: linear-gradient(90deg, #9ab4d2, #b9cfe5); font-size: ${(p) => p.$fs}px; letter-spacing: -0.6px; color: #1c1c1c;
`;
const TableTools = styled.div`height: 69px; flex: none; display: flex; align-items: center; padding-left: 15px; background: linear-gradient(#f8f8f8, #f0f0f0);`;
const GridArea = styled.div`
  flex: 1; min-height: 0; margin-left: 4px; background: #eee; border-top: 9px solid #6e6e6e; border-left: 7px solid #6e6e6e; border-right: 12px solid #f0f0f0;
  padding-top: 2px;
`;
const GridTable = styled.div`
  display: grid; width: 2144px; grid-template-columns: 35px 88px 123px 123px 1fr; grid-template-rows: 42px repeat(5, 40px);
  font-family: ${ARIAL}; font-size: 27.2px; color: #111;
`;
const HeadCell = styled.div`
  background: #f0f0f0; font-weight: 700; font-size: 28px; color: #222; display: flex; align-items: center; justify-content: center; border: 2px solid #fff; border-right: 4px solid #3b3b3b; border-bottom: 4px solid #3b3b3b;
  &:last-child { background: #f2f2f2; }
`;
const RowHead = styled.div`
  background: #f0f0f0; border: 2px solid #fff; border-right: 4px solid #3b3b3b; border-bottom: 4px solid #3b3b3b; display: flex; align-items: center; justify-content: center;
`;
const Cell = styled.div<{ $num?: boolean; $cur?: boolean }>`
  background: #fff; border-right: 2px solid #777; border-bottom: 3px solid #8a8a8a; display: flex; align-items: center; padding: 0 5px;
  justify-content: ${(p) => (p.$num ? 'flex-end' : 'flex-start')}; white-space: nowrap;
  ${(p) => (p.$cur ? 'outline: 3px solid #111; outline-offset: -3px;' : '')}
`;
const Pager = styled.div`height: 69px; flex: none; display: flex; align-items: center; padding-left: 14px; padding-bottom: 3px; background: linear-gradient(#f8f8f8, #f0f0f0); border-top: 2px solid #f8f8f8;`;
const PagerInput = styled.div`flex: none; width: 144px; height: 46px; background: #fff; text-align: right; padding-right: 7px; font-size: 29px; line-height: 46px; color: #222;`;
const PagerText = styled.div`font-size: 29px; letter-spacing: -0.55px; color: #222; white-space: nowrap;`;
const TabStrip = styled.div`height: 60px; flex: none; padding: 3px 0 0 7px; background: #f0f0f0; border-top: 2px solid #fff;`;
const TableTab = styled.div`
  width: 201px; height: 47px; background: #fbfbfb; border: 2px solid #bdbdbd; border-top: none; border-radius: 0 0 7px 7px; padding: 2px 3px;
`;
const TabInner = styled.div`
  height: 39px; border: 3px dotted #333; display: flex; align-items: center; justify-content: center; font-size: 30px; letter-spacing: -0.5px; color: #111; line-height: 30px;
`;

/* small pieces */
const X: React.FC<{ s?: number; c?: string }> = ({ s = 24, c = '#222' }) => (
  <svg width={s} height={s} viewBox="0 0 20 20"><path d="M3 3l14 14M17 3L3 17" stroke={c} strokeWidth="3.6" /></svg>
);
const Tri: React.FC<{ dir: 'up' | 'down' | 'left' | 'right'; s?: number; c?: string }> = ({ dir, s = 22, c = '#666' }) => {
  const d = { up: 'M3 15l8-9 8 9', down: 'M3 7l8 9 8-9', left: 'M15 3l-9 8 9 8', right: 'M7 3l9 8-9 8' }[dir];
  return <svg width={s} height={s} viewBox="0 0 22 22"><path d={d} fill="none" stroke={c} strokeWidth="4.5" /></svg>;
};
const PageBtn: React.FC<{ d: string; w: number }> = ({ d, w }) => (
  <Slot $w={w}><svg width="24" height="24" viewBox="0 0 24 24"><path d={d} fill="#111" /></svg></Slot>
);
const Caret: React.FC<{ c?: string }> = ({ c = '#111' }) => (
  <svg width="14" height="10" viewBox="0 0 14 10"><path d="M0 0h14L7 9z" fill={c} /></svg>
);

type TB = Array<[string | null, number, boolean?] | number>;
const renderTools = (items: TB) => items.map((it, i) => {
  if (typeof it === 'number') return <Sep key={i} $w={it} />;
  if (it[0] === null) return <Drop key={i} $w={it[1]}><Caret c={it[2] ? '#bbb' : '#111'} /></Drop>;
  return <Slot key={i} $w={it[1]} $on={!!it[2]}><Ico n={it[0]} /></Slot>;
});

const row1a: TB = [['new',54],['open',54],['save',54],['print',56],12,['cut',62],['copy',50],['paste',58],['del',50],20,['undo',50],['redo',62],6,['add',64],[null,14],25];
const row1b: TB = [16,['editorTb',54,true],16,['win1',54],['catalog',54],['search',62],['toolboxw',40],['python',67],8,['model',60]];
const edit: TB = [20,['pointerB',55,true],['sketch',66],['segA',62],['segB',50],['vert',58],[null,22,true],['star',66],10,['topo',54],['topo2',57],['split',54],['xcut',56],['q',52],8,['attr',66],['sketchProp',46],24,['createF',42]];
const row2a: TB = [['zoomIn',46],['zoomOut',64],['hand',50],['globe',58],12,['fixIn',62],['fixOut',46],20,['back',60],['fwd',42],30,['selF',44],[null,30,true],['clearS',62],4,['pointer',68],4,['ident',56],['flash',64],['html',38],34,['measure',36],34,['find',36],['route',76],['xy',32],34,['time',42],26,['viewer',46]];
const classify: TB = [['clsWin',64],['clsX',42],30,['clsPoly',38],[null,46],['clsSel',46]];
const tableTools: TB = [['tocOpt',40],[null,40],6,['relT',66],[null,12],34,['selTbl',36],['swTbl',74],['zmSel',42],['zmSel2',60],['del',54]];

const menus: Array<[string, number]> = [['File',85],['Edit',90],['View',103],['Bookmarks',188],['Insert',112],['Selection',160],['Geoprocessing',235],['Customize',180],['Windows',162],['Help',80]];
const sc: Array<[string, string]> = [['1','#AD8149'],['101','#2600D9'],['201','#06F200'],['301','#3F6CB5']];
const reclass: Array<[string, string]> = [['Waterbody','#00BEFF'],['Swamp and Vegetation','#2A7000'],['Open Area','#C8A764'],['Urban Area','#DEDEDE']];
const icuc: Array<[string, string]> = [['1','#8F3214'],['2','#3A1AAC'],['3','#1EF5E0'],['4','#E8FF1E'],['5','#C9ACDE'],['6','#F01488'],['7','#305018'],['8','#0CC800'],['9','#001E50'],['10','#FFAC3C'],['11','#640A3C'],['12','#AFE682'],['13','#4B4140'],['14','#0F8CA0']];
const rows = [['0','1','1217022','WaterBody'],['1','101','461138','Swamp and Vegetation'],['2','201','1376928','Open Area'],['3','301','1550164','Urban Area'],['','','','']];

const Folder = () => (
  <svg width="37" height="30" viewBox="0 0 37 30" style={{ flex: 'none', marginRight: 14 }}>
    <path d="M1 28V5l3-3h11l3 4h17v22z" fill="#d4b94c" stroke="#8a7a3a" strokeWidth="1.6" />
    <path d="M1 28V11h34v17z" fill="#f6e68f" stroke="#8a7a3a" strokeWidth="1.6" />
    <rect x="1" y="28" width="35" height="2" fill="#bbb" />
  </svg>
);
const ArcGlobe: React.FC<{ s: number }> = ({ s }) => (
  <svg width={s} height={s} viewBox="0 0 80 80">
    <defs>
      <radialGradient id="arcg" cx="45%" cy="40%" r="60%"><stop offset="0" stopColor="#3aa3e6" /><stop offset="1" stopColor="#063a82" /></radialGradient>
    </defs>
    <circle cx="40" cy="40" r="38" fill="url(#arcg)" />
    <path d="M14 18c8-8 20-12 30-12 4 6-6 8-10 14-6 4-14 6-20-2zM48 30c10-4 24-2 28 8 0 12-8 24-18 30-8 0-6-12-12-16-4-8-4-18 2-22zM6 46c6 0 14 6 18 14 2 6-2 10-6 8-6-4-10-12-12-22z" fill="#4fa54a" />
    <circle cx="34" cy="30" r="21" fill="#cfe7fa" stroke="#d8d8d8" strokeWidth="4" />
    <path d="M22 28c4-10 14-12 20-8" stroke="#fff" strokeWidth="6" fill="none" opacity=".85" />
    <path d="M50 46l5-3 3 4-3 3z" fill="#ccc" />
    <path d="M54 50l20 20" stroke="#b86a28" strokeWidth="8" strokeLinecap="round" />
  </svg>
);
const WinLogo = () => (
  <svg width="52" height="52" viewBox="0 0 52 52"><path d="M0 8l23-3v21H0zM26 4.5L52 1v25H26zM0 29h23v19L0 45zM26 29h26v23l-26-3.6z" fill="#fff" /></svg>
);
const IE = () => (
  <svg width="76" height="76" viewBox="0 0 76 76">
    <path d="M39 14C60 14 71 28 71 47H28c1 10 8 15 17 15 7 0 11-3 16-7h9c-5 12-14 19-26 19C24 74 12 60 12 42S23 14 39 14zM28 35h27c-1-7-7-11-14-11-7 0-12 4-13 11z" fill="#2cb0ee" />
    <path d="M6 70C0 60 18 24 52 8c12-5 20-4 20 5 0 4-3 9-6 12 2-6 2-13-8-10C36 22 14 50 14 64c0 4 6 5 12 3-7 5-17 8-20 3z" fill="#f0b824" />
  </svg>
);
const Explorer = () => (
  <svg width="76" height="76" viewBox="0 0 76 76">
    <path d="M4 10h26l4 4h30v16H4z" fill="#e3c769" /><rect x="12" y="6" width="22" height="10" fill="#f3f3f3" /><rect x="14" y="8" width="6" height="3" fill="#3fa53a" />
    <rect x="36" y="14" width="26" height="10" fill="#f3f3f3" /><rect x="40" y="16" width="8" height="3" fill="#d55" />
    <rect x="4" y="24" width="68" height="46" fill="#f8e492" />
    <path d="M8 60c14-16 40-16 60-2v12H8z" fill="#6fc5f2" /><rect x="22" y="56" width="32" height="14" fill="#e7c84a" /><rect x="32" y="63" width="12" height="7" fill="#6fc5f2" />
  </svg>
);
const BagTile = () => (
  <svg width="82" height="80" viewBox="0 0 82 80">
    <rect width="82" height="80" rx="12" fill="#27aef2" /><path d="M82 46L52 24 16 52l24 28h32c6 0 10-4 10-10z" fill="#1c8ed0" />
    <rect x="17" y="15" width="48" height="46" rx="3" fill="#f2f2f2" />
    <path d="M30 24c0 24 22 24 22 0" fill="none" stroke="#27aef2" strokeWidth="3.5" strokeLinecap="round" />
  </svg>
);
const Headphones = () => (
  <svg width="70" height="80" viewBox="0 0 70 80">
    <path d="M8 52C2 20 18 4 35 4s33 16 27 48" fill="none" stroke="#f0a020" strokeWidth="7" />
    <rect x="6" y="42" width="13" height="32" rx="5" fill="#ea8a12" /><rect x="51" y="42" width="13" height="32" rx="5" fill="#ea8a12" />
    <rect x="19" y="38" width="11" height="38" rx="5" fill="#666" /><rect x="40" y="38" width="11" height="38" rx="5" fill="#666" />
  </svg>
);
const LenovoTile = () => (
  <svg width="80" height="80" viewBox="0 0 80 80">
    <rect x="0" y="0" width="80" height="66" fill="#fff" /><rect x="5" y="5" width="70" height="56" fill="#1874b8" />
    <path d="M5 42c20-8 36 8 70-2v4c-30 10-48-6-70 2z" fill="#fff" /><path d="M5 50c20-6 40 6 70-2v13H5z" fill="#0f5c98" />
    <text x="40" y="32" textAnchor="middle" fontFamily={ARIAL} fontWeight="700" fontStyle="italic" fontSize="18" fill="#fff">lenovo</text>
    <path d="M30 66h20l4 11c2 2 4 2 4 3H22c0-1 2-1 4-3z" fill="#fff" />
  </svg>
);
const Chrome = () => (
  <svg width="74" height="74" viewBox="0 0 74 74">
    <circle cx="37" cy="37" r="36" fill="#1da362" />
    <path d="M37 1c14 0 26 8 32 20H37c-8 0-14 5-16 11L9 14C15 6 25 1 37 1z" fill="#dd4b3e" />
    <path d="M69 21c6 13 5 28-3 39-7 9-17 13-27 13l15-25c3-6 3-12 0-17l-5-10z" fill="#ffcd40" />
    <circle cx="37" cy="37" r="16" fill="#fff" /><circle cx="37" cy="37" r="12.5" fill="#4a8af4" />
  </svg>
);
const StoreTile = () => (
  <svg width="76" height="78" viewBox="0 0 76 78">
    <rect width="76" height="78" fill="#008a00" />
    <path d="M26 24C26 6 50 6 50 24" fill="none" stroke="#fff" strokeWidth="2.5" />
    <path d="M15 26l47-3v50l-12 3-35-6z" fill="#fff" />
    <g fill="#008a00"><rect x="22" y="33" width="12" height="11" /><rect x="36" y="33" width="13" height="11" /><rect x="22" y="46" width="12" height="11" /><rect x="36" y="46" width="13" height="11" /></g>
  </svg>
);
const CubeTile = () => (
  <svg width="80" height="80" viewBox="0 0 80 80">
    <rect x="1" y="1" width="78" height="78" fill="#d90d14" stroke="#333" strokeWidth="2" />
    <rect y="76" width="80" height="4" fill="#c8c8c8" />
    <path d="M40 15l23 13v27L40 68 17 55V28z M40 42l-17-9M40 42l17-9M40 42v20" fill="none" stroke="#fff" strokeWidth="3.5" strokeLinecap="round" />
  </svg>
);
const Edge = () => (
  <svg width="82" height="82" viewBox="0 0 82 82">
    <defs>
      <linearGradient id="edgeT" x1="0" y1="0" x2="1" y2="1"><stop offset="0" stopColor="#2aa5f0" /><stop offset="1" stopColor="#5fe05a" /></linearGradient>
    </defs>
    <path d="M1 38C3 15 20 1 41 1c24 0 40 18 40 38 0 9-7 16-18 16-8 0-14-3-14-8 0-3 2-4 2-8 0-7-6-12-14-12C20 27 2 38 1 38z" fill="url(#edgeT)" />
    <path d="M1 38c0-12 12-20 26-20 14 0 22 7 20 13-10-4-20 2-20 14 0 14 12 30 26 28 5 0 11-2 15-6C62 78 50 82 41 82 18 82 1 62 1 38z" fill="#0d72c8" />
    <path d="M27 45c0-12 10-18 20-14 2 6-2 8-2 12 0 8 12 14 22 12 3 0 5-1 8-2-6 14-18 22-22 20C39 75 27 60 27 45z" fill="#0e5299" />
  </svg>
);
const Keyboard = () => (
  <svg width="60" height="36" viewBox="0 0 60 36">
    <rect x="1" y="1" width="58" height="34" rx="3" fill="#fff" stroke="#3a2f1c" />
    <rect x="5" y="5" width="50" height="26" fill="#3a2f1c" />
    {[0, 1, 2, 3, 4, 5].map((i) => <rect key={i} x={7 + i * 8} y={7} width="6.5" height="6" fill="#fff" />)}
    {[0, 1, 2, 3, 4, 5].map((i) => <rect key={i} x={7 + i * 8} y={15} width="6.5" height="5" fill="#fff" />)}
    <rect x="7" y="22" width="7" height="6" fill="#fff" /><rect x="16" y="22" width="28" height="6" fill="#fff" /><rect x="46" y="22" width="7" height="6" fill="#fff" />
  </svg>
);
const Plug = () => (
  <svg width="36" height="50" viewBox="0 0 36 50">
    <rect x="6" y="0" width="5" height="14" fill="#fff" stroke="#444" /><rect x="25" y="0" width="5" height="14" fill="#fff" stroke="#444" />
    <path d="M1 12h34v18c0 6-8 10-13 11v8h-8v-8C9 40 1 36 1 30z" fill="#fff" stroke="#444" />
    <path d="M9 25l7 7 12-12" stroke="#3a3a3a" strokeWidth="8" fill="none" /><path d="M9 25l7 7 12-12" stroke="#22c4f2" strokeWidth="4.5" fill="none" />
  </svg>
);
const Wheel = () => (
  <svg width="42" height="42" viewBox="0 0 42 42">
    <circle cx="21" cy="21" r="20" fill="#6a6a6a" /><circle cx="21" cy="21" r="13" fill="none" stroke="#ddd" strokeWidth="2.5" strokeDasharray="3 1" /><path d="M13 13l8 8 8-8M21 21v11" stroke="#ddd" strokeWidth="3" fill="none" />
  </svg>
);
const FlagX = () => (
  <svg width="42" height="60" viewBox="0 0 42 60">
    <rect x="2" y="2" width="4" height="54" fill="#fff" stroke="#222" strokeWidth=".6" />
    <path d="M6 3h14c0 6 2 9 5 9h12v16H24c-4 0-6-2-6-6H6z" fill="#fff" stroke="#222" strokeWidth=".6" />
    <ellipse cx="28" cy="44" rx="11" ry="13" fill="#e01818" /><path d="M22 38l12 12M34 38L22 50" stroke="#fff" strokeWidth="4" />
  </svg>
);
const Signal = () => (
  <svg width="40" height="32" viewBox="0 0 40 32">
    <rect x="1" y="22" width="6" height="9" fill="#fff" /><rect x="10" y="15" width="6" height="16" fill="#fff" /><rect x="19" y="8" width="6" height="23" fill="#fff" /><rect x="28" y="1" width="8" height="30" fill="#8a8a8a" stroke="#2a2a2a" />
  </svg>
);
const Speaker = () => (
  <svg width="40" height="40" viewBox="0 0 40 40">
    <path d="M2 13h8l9-10v34l-9-10H2z" fill="#fff" stroke="#222" /><path d="M25 15c2 3 2 7 0 10M30 10c4 6 4 14 0 20M35 6c6 8 6 20 0 28" fill="none" stroke="#ddd" strokeWidth="1.6" />
  </svg>
);
const TrayUp = () => <svg width="26" height="16" viewBox="0 0 26 16"><path d="M13 0l13 16H0z" fill="#e9e9e9" /></svg>;

const App: React.FC = () => (
  <Root>
    <Global />
    <TitleBar>
      <TitleLeft><ArcGlobe s={42} /></TitleLeft>
      <TitleText>Om_18376_EES336_A3 - ArcMap</TitleText>
      <TitleRight>
        <WinBtn $w={66}><svg width="18" height="6" viewBox="0 0 18 6"><rect width="16" height="5" fill="#222" /></svg></WinBtn>
        <WinBtn $w={66}><svg width="18" height="22" viewBox="0 0 18 22"><path d="M4 1h12v15H2V5h12v11" fill="none" stroke="#222" strokeWidth="3" /></svg></WinBtn>
        <WinBtn $w={115} $red><X s={20} c="#fff" /></WinBtn>
      </TitleRight>
    </TitleBar>

    <MenuBar>{menus.map(([m, w]) => <MenuItem key={m} $w={w}>{m}</MenuItem>)}</MenuBar>

    <ToolRow>
      <ToolGroup $w={1540}>
        <Grip />
        {renderTools(row1a)}
        <ComboBox $w={368} $h={51}><ComboText $up>1:400,000</ComboText><ComboChev><Tri dir="down" c="#444" /></ComboChev></ComboBox>
        {renderTools(row1b)}
        <EndGrip />
      </ToolGroup>
      <ToolGroup $w={1038} $ml={16}>
        <Grip />
        <GroupLabel $w={88} $ml={8}>Editor</GroupLabel>
        <Drop $w={14}><Caret /></Drop>
        {renderTools(edit)}
        <EndGrip />
      </ToolGroup>
    </ToolRow>
    <ToolRow>
      <ToolGroup $w={1310}>
        <Grip />
        {renderTools(row2a)}
        <EndGrip />
      </ToolGroup>
      <ToolGroup $w={972} $ml={230}>
        <Grip />
        <GroupLabel $w={182} $ml={1}>Classification</GroupLabel>
        <Drop $w={14}><Caret /></Drop>
        <Sep $w={23} />
        <ComboBox $w={445} $h={46}>
          <svg width="52" height="42" viewBox="0 0 52 42" style={{ flex: 'none' }}><path d="M26 1l20 20-20 20L6 21z" fill="#b8dfe2" stroke="#a88a4a" strokeWidth="2" /><path d="M26 8l13 13-13 13-13-13zM19 15l13 13M33 15L20 28" fill="none" stroke="#5aaab8" /></svg>
          <ComboText>Composite_234567.tif</ComboText>
          <ComboDrop><Caret /></ComboDrop>
        </ComboBox>
        {renderTools(classify)}
        <EndGrip />
      </ToolGroup>
    </ToolRow>

    <Workspace>
      <Toc>
        <TocTitle>
          Table Of Contents
          <PanelIcons>
            <svg width="18" height="26" viewBox="0 0 18 26"><path d="M4 1h10v14H4zM1 15h16M9 15v10" fill="none" stroke="#111" strokeWidth="3" /></svg>
            <X />
          </PanelIcons>
        </TocTitle>
        <TocTools>
          <Slot $w={55}><Ico n="tocDraw" /></Slot>
          <Slot $w={54} $on><Ico n="tocSrc" /></Slot>
          <Slot $w={56}><Ico n="tocVis" /></Slot>
          <Slot $w={56}><Ico n="tocSel" /></Slot>
          <Sep $w={10} />
          <Slot $w={60}><Ico n="tocOpt" /></Slot>
        </TocTools>
        <TocBody>
          <Tree>
            <LayersLabel $pad={15} $bold>Layers</LayersLabel>
            <TreeRow $pad={15}><Folder />{'D:\\Om\\IISER\\RS_and_GIS_A'}</TreeRow>
            <TreeRow $pad={22}><Minus /><Check><svg width="22" height="20" viewBox="0 0 22 20"><path d="M3 10l6 7L19 3" fill="none" stroke="#111" strokeWidth="4" /></svg></Check><NodeName $sel>SC_output.tif</NodeName></TreeRow>
            {sc.map(([l, c]) => <TreeRow key={l} $pad={102}><Swatch $c={c} />{l}</TreeRow>)}
            <TreeRow $pad={15}><Folder />{'D:\\Om\\IISER\\RS_and_GIS_A'}</TreeRow>
            <TreeRow $pad={22}><Minus /><Check /><NodeName>Reclass_ICUC.tif</NodeName></TreeRow>
            {reclass.map(([l, c]) => <TreeRow key={l} $pad={102}><Swatch $c={c} />{l}</TreeRow>)}
            <TreeRow $pad={22}><Minus /><Check /><NodeName>ICUC.tif</NodeName></TreeRow>
            {icuc.map(([l, c]) => <TreeRow key={l} $pad={102}><Swatch $c={c} />{l}</TreeRow>)}
          </Tree>
          <VScroll><Tri dir="up" s={26} /><Tri dir="down" s={26} /></VScroll>
          <HScroll>
            <ScrollEnd $w={50}><Tri dir="left" s={24} /></ScrollEnd>
            <ScrollEnd $w={24} />
            <Thumb $w={145} />
            <ScrollEnd $w={184} />
            <ScrollEnd $w={40}><Tri dir="right" s={24} /></ScrollEnd>
          </HScroll>
          <Corner />
        </TocBody>
      </Toc>

      <MapCol>
        <MapTop>
          <MapCanvas><MapDrawing /></MapCanvas>
          <MapScroll>
            <Tri dir="up" s={26} c="#555" />
            <VThumb />
            <Tri dir="down" s={26} c="#555" />
          </MapScroll>
        </MapTop>
        <MapBottom>
          <ViewBtn $w={42} $on><Ico n="dataView" s={26} /></ViewBtn>
          <ViewBtn $w={44}><Ico n="layoutV" s={26} /></ViewBtn>
          <BottomSep />
          <ViewBtn $w={44}><Ico n="refresh" s={26} /></ViewBtn>
          <ViewBtn $w={42}><Ico n="pause" s={22} /></ViewBtn>
          <ViewBtn $w={41}><Tri dir="left" s={24} c="#555" /></ViewBtn>
          <HThumb />
          <ViewBtn $w={48}><Tri dir="right" s={24} c="#555" /></ViewBtn>
        </MapBottom>
      </MapCol>
      <SideTabs>
        <SideTab $h={172}>
          <svg width="40" height="40" viewBox="0 0 40 40"><W /><path d="M6 18l10-7 4 5-9 6z" fill="#444" /><path d="M18 16l18 21" stroke="#d6a26c" strokeWidth="5" /></svg>
          <SideText>Results</SideText>
        </SideTab>
        <SideTab $h={222}>
          <Ico n="toolboxw" />
          <SideText>ArcToolbox</SideText>
        </SideTab>
        <SideTab $h={167} $mt={35}>
          <Ico n="search" />
          <SideText>Search</SideText>
        </SideTab>
      </SideTabs>
    </Workspace>

    <StatusBar>278572.262&nbsp;&nbsp;2101187.991 Meters</StatusBar>

    <TaskBar>
      <Wallpaper width="3200" height="88" viewBox="0 0 3200 88">
        <defs>
          <linearGradient id="wp" x1="0" x2="1" y1="0" y2="0"><stop offset="0" stopColor="#9a7a34" /><stop offset=".55" stopColor="#c07c26" /><stop offset="1" stopColor="#c47a22" /></linearGradient>
          <filter id="wpb"><feGaussianBlur stdDeviation="3" /></filter>
        </defs>
        <g filter="url(#wpb)">
          <path d="M1087 0H1375V88H1300C1260 58 1210 48 1140 34z" fill="url(#wp)" />
          <path d="M1497 32l33 6-4 22-29-4z" fill="#a8502a" opacity=".75" />
        </g>
        <path d="M1090 22c40 4 60 30 110 32 50 2 90 14 110 34" fill="none" stroke="#d8c49a" strokeWidth="2" opacity=".55" />
        <path d="M1220 0c30 16 60 20 90 22" fill="none" stroke="#5e4a2e" strokeWidth="6" />
      </Wallpaper>
      <TaskInner>
        <StartSlot><WinLogo /></StartSlot>
        <TaskSlot><IE /></TaskSlot>
        <TaskSlot $on><Explorer /></TaskSlot>
        <TaskSlot><BagTile /></TaskSlot>
        <TaskSlot>
          <AdobeTile>
            <svg width="56" height="56" viewBox="0 0 56 56"><path d="M0 0h18L0 44zM38 0h18v44zM28 16l15 36h-9l-5-11H19z" fill="#e2231a" /></svg>
            <AdobeWord>Adobe</AdobeWord>
          </AdobeTile>
        </TaskSlot>
        <TaskSlot><Headphones /></TaskSlot>
        <TaskSlot><LenovoTile /></TaskSlot>
        <TaskSlot $on><Chrome /></TaskSlot>
        <TaskSlot><StoreTile /></TaskSlot>
        <TaskSlot><CubeTile /></TaskSlot>
        <TaskSlot><Edge /></TaskSlot>
        <TaskSlot $strong><ArcGlobe s={76} /></TaskSlot>
        <Tray>
          <TrayItem $w={60}><Keyboard /></TrayItem>
          <TrayItem $w={36} $ml={22}><Plug /></TrayItem>
          <TrayItem $w={96} $ml={4}><Battery><BatteryText>40%</BatteryText></Battery></TrayItem>
          <TrayItem $w={30} $ml={49}><TrayUp /></TrayItem>
          <TrayItem $w={42} $ml={70}><Wheel /></TrayItem>
          <TrayItem $w={42} $ml={18}><FlagX /></TrayItem>
          <TrayItem $w={40} $ml={20}><Signal /></TrayItem>
          <TrayItem $w={40} $ml={18}><Speaker /></TrayItem>
          <Lang>ENG</Lang>
          <Clock>17:45<br />28/03/2021</Clock>
        </Tray>
      </TaskInner>
    </TaskBar>

    <TableWin>
      <BlueBar $h={60} $fs={37}>
        Table
        <PanelIcons>
          <svg width="22" height="22" viewBox="0 0 22 22"><rect x="1.5" y="1.5" width="19" height="19" fill="none" stroke="#111" strokeWidth="3" /><rect x="1" y="1" width="20" height="6" fill="#111" /></svg>
          <X />
        </PanelIcons>
      </BlueBar>
      <TableTools>{renderTools(tableTools)}</TableTools>
      <BlueBar $h={64} $fs={36}>SC_output.tif<X /></BlueBar>
      <GridArea>
        <GridTable>
          <RowHead />
          <HeadCell>OID</HeadCell><HeadCell>Value</HeadCell><HeadCell>Count</HeadCell><HeadCell>ClassName</HeadCell>
          {rows.map((r, i) => (
            <React.Fragment key={i}>
              <RowHead>{i === 3 && <svg width="12" height="20" viewBox="0 0 12 20"><path d="M1 0l10 10L1 20z" fill="#111" /></svg>}</RowHead>
              <Cell $num>{r[0]}</Cell><Cell $num>{r[1]}</Cell><Cell $num>{r[2]}</Cell><Cell $cur={i === 3}>{r[3]}</Cell>
            </React.Fragment>
          ))}
        </GridTable>
      </GridArea>
      <Pager>
        <PageBtn w={56} d="M5 3h4v18H5zM21 3v18L10 12z" />
        <PageBtn w={58} d="M18 3v18L7 12z" />
        <PagerInput>4</PagerInput>
        <PageBtn w={60} d="M7 3v18l11-9z" />
        <PageBtn w={52} d="M3 3v18l11-9zM16 3h4v18h-4z" />
        <Sep $w={16} />
        <Slot $w={55} $on><Ico n="stripes" /></Slot>
        <Slot $w={52}><Ico n="stripes2" /></Slot>
        <Sep $w={18} />
        <Slot $w={54}><Ico n="pencil" s={34} /></Slot>
        <PagerText>(0 out of 4 Selected)</PagerText>
      </Pager>
      <TabStrip><TableTab><TabInner>SC_output.tif</TabInner></TableTab></TabStrip>
    </TableWin>
  </Root>
);

export default App;
